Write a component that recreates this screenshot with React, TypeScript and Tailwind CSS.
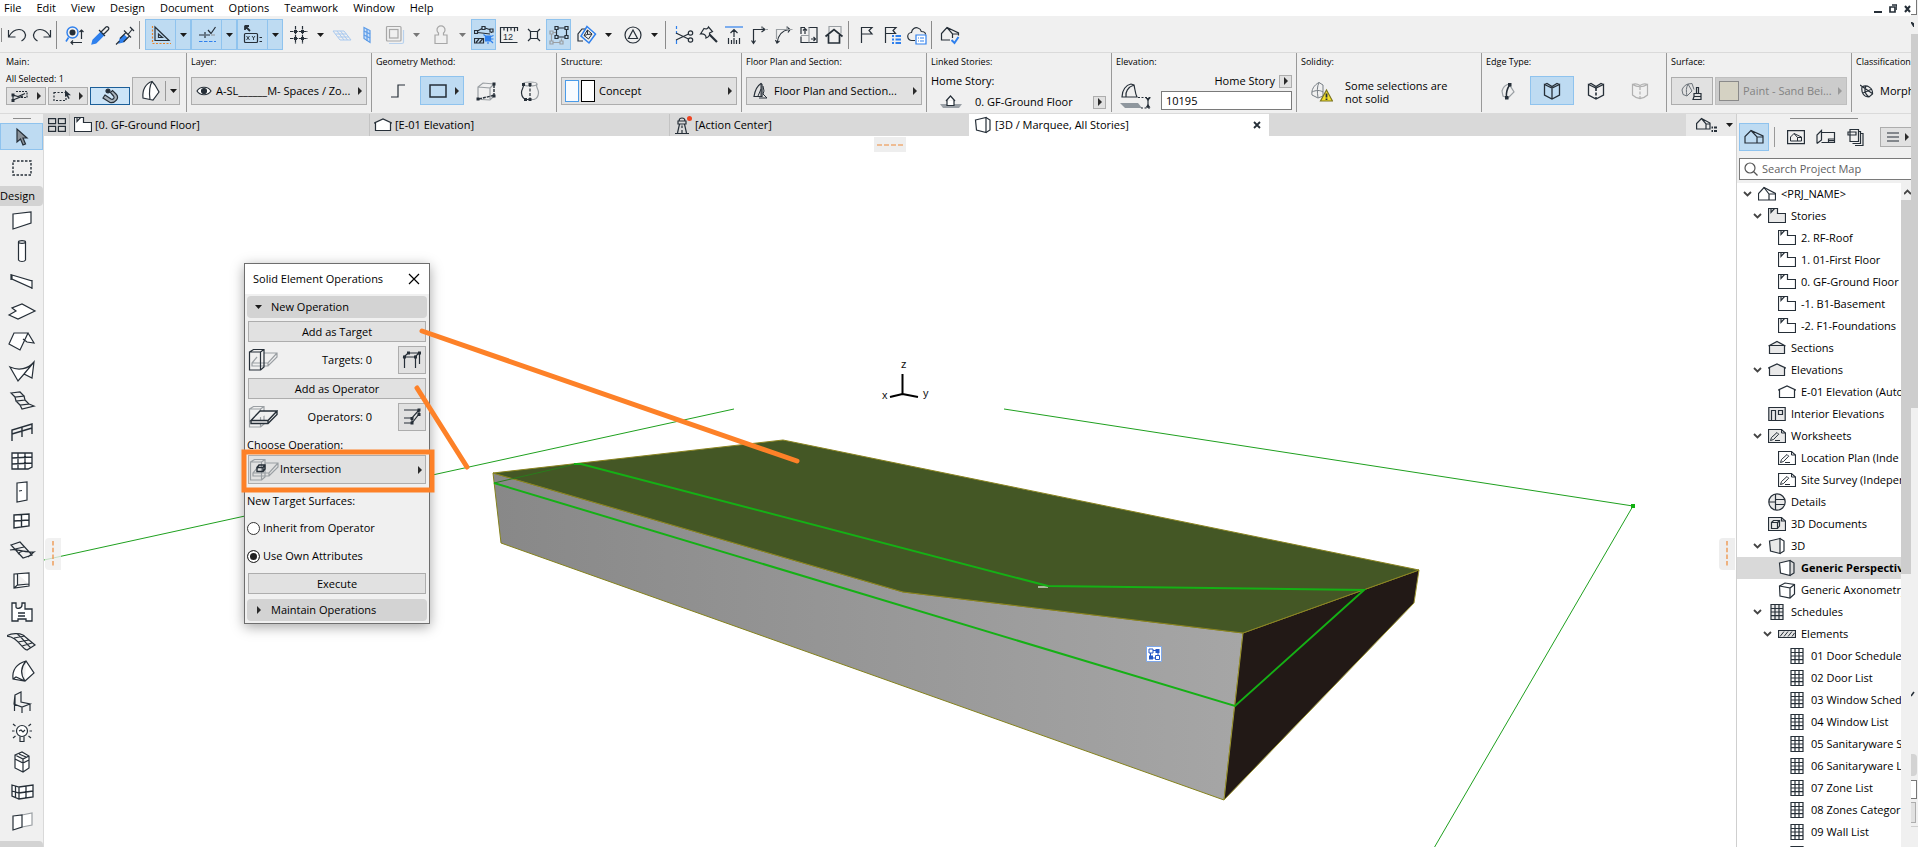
import { useState, type ReactNode } from "react";
import { clsx } from "clsx";

const INK = "#262f38";
const BLUE = "#2f80ed";
const GRAY = "#9a9fa3";

type SvgProps = { w?: number; h?: number; color?: string; children: ReactNode };

function Svg({ w = 20, h = 20, color = INK, children }: SvgProps) {
  return (
    <svg
      className="shrink-0"
      width={w}
      height={h}
      viewBox={`0 0 ${w} ${h}`}
      fill="none"
      stroke={color}
      strokeWidth="1.2"
      aria-hidden="true"
    >
      {children}
    </svg>
  );
}

function ArrowDown({ muted = false }: { muted?: boolean }) {
  return (
    <Svg w={7} h={4}>
      <path d="M0 0h7L3.5 4z" fill={muted ? "#777" : "#1b1b1b"} stroke="none" />
    </Svg>
  );
}

function ArrowRight({ muted = false }: { muted?: boolean }) {
  return (
    <Svg w={4} h={8}>
      <path d="M0 0v8l4-4z" fill={muted ? "#999" : "#2a2a2a"} stroke="none" />
    </Svg>
  );
}

/* ---------- shared icons ---------- */

const StoryIcon = ({ filled = false }: { filled?: boolean }) => (
  <Svg w={18} h={18}>
    <path d="M.5 1.500h9v5h8v9H.5z" fill={filled ? "#e9e9e9" : "#fff"} />
    <path d="M3 1.500v4l3.500-4" />
  </Svg>
);

const ElevationIcon = ({ filled = false }: { filled?: boolean }) => (
  <Svg w={18} h={18}>
    <path d="M1.500 14.500v-8L9 3l7.500 3.500v8z" fill={filled ? "#e9e9e9" : "#fff"} />
    <path d="M0 7.300l1.500-.8M16.500 6.500l1.500.8" />
  </Svg>
);

const SectionIcon = () => (
  <Svg w={18} h={18}>
    <path d="M1.500 6.500h15v8h-15zM.5 7L9 2.500 17.500 7" fill="#e9e9e9" />
  </Svg>
);

const InteriorIcon = () => (
  <Svg w={18} h={18}>
    <path d="M.8 2.500h16.400v13H.8z" fill="#e9e9e9" />
    <path d="M3.500 15.500V5.500h4v10M10.500 5.500h4v4h-4z" />
  </Svg>
);

const WorksheetIcon = ({ filled = false }: { filled?: boolean }) => (
  <Svg w={18} h={18}>
    <path d="M.5 2.500h13l4 3.500v9.500H.5z" fill={filled ? "#e9e9e9" : "#fff"} />
    <path d="M13.500 2.500V6h4M2.500 13.500l1-3L9 5.500l1.700 1.700-5.200 5.300z" strokeWidth="1" />
    <path d="M7 13.500h5" strokeWidth="1" />
  </Svg>
);

const DetailIcon = () => (
  <Svg w={18} h={18}>
    <circle cx="9" cy="9" r="8.200" fill="#e9e9e9" />
    <path d="M7.500 1v16M1 9h6.500M7.500 6.500h9M7.500 11.500h9" />
  </Svg>
);

const Doc3dIcon = () => (
  <Svg w={18} h={18}>
    <path d="M.5 2.500h13l4 3.500v9.500H.5z" fill="#e9e9e9" />
    <path d="M13.500 2.500V6h4M3.500 7.500h6v6h-6zM3.500 7.500l2-2h6v5.500l-2 2.500M9.500 7.500l2-2" />
  </Svg>
);

const PerspectiveIcon = ({ filled = false }: { filled?: boolean }) => (
  <Svg w={18} h={18}>
    <path d="M1.500 4L12 1.500v15L2.500 14z" fill={filled ? "#e9e9e9" : "#fff"} />
    <path d="M12 1.500l4 2.500v10l-4 2.500" />
  </Svg>
);

const AxonometryIcon = () => (
  <Svg w={18} h={18}>
    <path d="M1.500 5l5.500-3 9.500 1.500V13L12 17 2 15z" fill="#fff" />
    <path d="M1.500 5L12 7v10M12 7l4.500-3.500" />
  </Svg>
);

const GridIcon = ({ filled = false }: { filled?: boolean }) => (
  <Svg w={18} h={18}>
    <path d="M3 1.500h12v15H3z" fill={filled ? "#e9e9e9" : "#fff"} />
    <path d="M3 5.500h12M3 9h12M3 12.700h12M7 1.500v15M11 1.500v15" />
  </Svg>
);

const HatchIcon = () => (
  <Svg w={18} h={18}>
    <path d="M.5 5.500h17v7H.5z" fill="#e3e3e3" />
    <path d="M2 11.500l4-5M6 11.500l4-5M10 11.500l4-5M14 11.500l2.500-3.500" strokeWidth="1" />
  </Svg>
);

const HousesIcon = () => (
  <Svg w={20} h={16}>
    <path d="M1 14V7.500l6-6L19 7v7zM7 1.500L13 8h6M13 8v6" />
  </Svg>
);

const ProjectIcon = () => (
  <Svg w={18} h={18}>
    <path d="M.5 15V8.500l5.500-6 11.500 6V15z" fill="#fff" />
    <path d="M6 2.500L11 9h6.500M11 9v6" />
  </Svg>
);

/* ---------- top bars ---------- */

const menus = ["File", "Edit", "View", "Design", "Document", "Options", "Teamwork", "Window", "Help"];

function MenuBar() {
  return (
    <nav className="flex h-4 shrink-0 items-center justify-between bg-white pl-1">
      <div className="flex gap-[15px]">
        {menus.map((m) => (
          <button key={m} type="button" className="text-[11px] leading-4">
            {m}
          </button>
        ))}
      </div>
      <div className="flex items-center gap-[7px]">
        <button type="button" aria-label="Minimize">
          <Svg w={8} h={10}>
            <path d="M0 9h8" strokeWidth="2" />
          </Svg>
        </button>
        <button type="button" aria-label="Restore">
          <Svg w={8} h={10}>
            <path d="M1 4h5v5H1zM3 2h5v5" strokeWidth="1.700" />
          </Svg>
        </button>
        <button type="button" aria-label="Close">
          <Svg w={7} h={10}>
            <path d="M1 3l5 6M6 3L1 9" strokeWidth="2" />
          </Svg>
        </button>
      </div>
    </nav>
  );
}

function Tool({ label, active = false, className = "", children }: { label: string; active?: boolean; className?: string; children: ReactNode }) {
  return (
    <button
      type="button"
      aria-label={label}
      className={clsx(
        "flex h-[31px] w-[25px] shrink-0 items-center justify-center",
        active && "border border-[#8fc3ee] bg-[#bedbf2]",
        className
      )}
    >
      {children}
    </button>
  );
}

function Drop({ label, muted = false }: { label: string; muted?: boolean }) {
  return (
    <button type="button" aria-label={label} className="flex h-[31px] w-[18px] shrink-0 items-center justify-center">
      <ArrowDown muted={muted} />
    </button>
  );
}

function SplitTool({ label, children }: { label: string; children: ReactNode }) {
  return (
    <div className="flex h-[31px] w-[46px] shrink-0 border border-[#8fc3ee] bg-[#bedbf2]">
      <button type="button" aria-label={label} className="flex w-[30px] items-center justify-center border-r border-[#8fc3ee]">
        {children}
      </button>
      <button type="button" aria-label={`${label} options`} className="flex flex-1 items-center justify-center">
        <ArrowDown />
      </button>
    </div>
  );
}

const Sep = () => <div className="mr-[5px] ml-[2px] h-7 w-px shrink-0 bg-[#8b8b8b]" />;

function Toolbar() {
  return (
    <div className="flex h-[37px] shrink-0 items-center border-b border-[#dadada] bg-[#f0f0f0] pt-px pl-px">
      <div className="mr-[2px] h-[14px] w-px bg-[#8b8b8b]" />
      <Tool label="Undo">
        <Svg>
          <path d="M1.500 5v7h7M2 11.500C5 6 8 4.500 12 4.500c5 0 7.500 4.500 6 8-.7 1.500-2 2.700-3.500 3.500" />
        </Svg>
      </Tool>
      <Tool label="Redo">
        <Svg>
          <path d="M18.500 5v7h-7M18 11.500C15 6 12 4.500 8 4.500c-5 0-7.500 4.500-6 8 .7 1.500 2 2.700 3.500 3.500" />
        </Svg>
      </Tool>
      <Sep />
      <Tool label="Find and select">
        <Svg>
          <circle cx="7.500" cy="7.500" r="5.500" stroke={BLUE} strokeWidth="1.400" />
          <circle cx="7.500" cy="7.500" r="3" fill={INK} stroke="none" />
          <path d="M3.500 12.500L1 16.500" stroke={BLUE} strokeWidth="1.600" />
          <path d="M16.500 14V5M14.500 7l2-2 2 2M17 17.500H6M8 15.500l-2 2 2 2" />
        </Svg>
      </Tool>
      <Tool label="Pick up parameters">
        <Svg>
          <path d="M2 19l1-4 8-8 3 3-8 8z" fill={BLUE} stroke={BLUE} />
          <path d="M9 5l6 6M11 7l5-5c1.500-1.200 3.500 1 2.500 2.500L13.500 9.500" />
        </Svg>
      </Tool>
      <Tool label="Inject parameters">
        <Svg>
          <path d="M5 14l4-4 3 3-4 4-4 1z" fill={BLUE} stroke={BLUE} />
          <path d="M4.500 16L1 19.500M5 13.500l6-6 3.500 3.500-6 6M9 5.500l7 7M13 9.500l4-5M15 2l4 4" />
        </Svg>
      </Tool>
      <Sep />
      <SplitTool label="Guide lines">
        <Svg>
          <path d="M1.500 1v17.500H20" stroke="#e8842a" strokeDasharray="2 1.500" />
          <path d="M4 2v13.500h14zM7.500 9v3.500h4z" />
        </Svg>
      </SplitTool>
      <SplitTool label="Snap guides">
        <Svg>
          <path d="M2 10h5M8 7v6M9 10h4" />
          <path d="M11 5l3 3.500L18.500 2" />
          <path d="M14 10h4" stroke={GRAY} />
          <path d="M2 16.500h17" stroke={BLUE} strokeDasharray="3.500 1.500" />
        </Svg>
      </SplitTool>
      <SplitTool label="Tracker">
        <Svg>
          <path d="M2 1h4M2 .5V5M2 1l5 5" strokeWidth="1.800" />
          <rect x="1.500" y="8.500" width="13" height="9" rx="1" />
          <path d="M3.500 11l3 4M6.500 11l-3 4M9 11l1.500 2L12 11M10.500 13v2" strokeWidth=".9" />
          <path d="M16.500 12.500H19M16.500 16.500H19" />
        </Svg>
      </SplitTool>
      <Tool label="Grid snap" className="ml-[3px]">
        <Svg>
          <path d="M6.500 1v18M13.500 1v18M1 6.500h18M1 13.500h18" strokeDasharray="3.500 .9" />
          <path d="M5 5h3v3H5zM12 5h3v3h-3zM5 12h3v3H5zM12 12h3v3h-3z" fill={INK} stroke="none" />
        </Svg>
      </Tool>
      <Drop label="Grid options" />
      <Tool label="Editing plane">
        <Svg color="#a9c9ef">
          <path d="M1 6h11l7 9H8zM3.500 9h11M6 12h11M5 6l7 9M8.500 6l7 9" strokeWidth="1" />
        </Svg>
      </Tool>
      <Tool label="Vertical plane">
        <Svg color="#5b9be8">
          <path d="M7 2.500l6 3v12l-6-4z" fill="#cfe2f8" />
          <path d="M7 6l6 3M7 10l6 3M10 4v12" />
        </Svg>
      </Tool>
      <Tool label="Trace reference" className="ml-[3px]">
        <Svg color="#a7a7a7">
          <path d="M4 18.500h13c1 0 1.500-.5 1.500-1.500V5" stroke="#b9d2ee" />
          <rect x="1.500" y="1.500" width="14.500" height="14.500" rx="1" />
          <rect x="4.500" y="4.500" width="8.500" height="8.500" />
        </Svg>
      </Tool>
      <Drop label="Trace options" muted />
      <Tool label="Gravity" className="ml-[3px]">
        <Svg color="#a7a7a7">
          <path d="M4 18.500V10h3.500V8a4 4 0 1 1 5 0v2H16v8.500z" />
        </Svg>
      </Tool>
      <Drop label="Gravity options" muted />
      <Tool label="Element snap" active>
        <Svg>
          <path d="M3.500 6L8 3.500M3.500 7.500L16 9M11 3l6 2M17.500 6.500V8" />
          <path d="M.5 5.500h3v3h-3zM8 1.500h3v3H8zM16 4h3v3h-3z" fill="#bedbf2" />
          <path d="M.5 13.500h9v4.500h-9zM2 17.500l3-3.500M5.500 17.500L8.500 14" />
          <path d="M11.500 11h5v5h-5z" fill={BLUE} stroke={BLUE} />
          <path d="M9.500 9.500l2 1.500M17 16l2 2M19.500 10.500l-2.500 1M14 19v-2M19.500 14H17" stroke={BLUE} />
        </Svg>
      </Tool>
      <Tool label="Ruler">
        <svg width="20" height="20" viewBox="0 0 20 20" fill="none" stroke={INK} strokeWidth="1.2" aria-hidden="true">
          <path d="M18.500 17.500H1.500v-15h17M5 3v2.500M8.500 3v3.500M12 3v2.500M15.500 3v3.500M18.500 2v4" />
          <text x="4" y="15" fontSize="9" fill={INK} stroke="none" fontFamily="Liberation Sans, sans-serif">
            12
          </text>
        </svg>
      </Tool>
      <Tool label="Explode">
        <Svg>
          <path d="M6.500 6.500h7v7h-7zM4 4l2.500 2.500M16 4l-2.500 2.500M4 16l2.500-2.500M16 16l-2.500-2.500" />
        </Svg>
      </Tool>
      <Tool label="Suspend groups" active>
        <Svg>
          <path d="M2.500 8.500v9h10v-4M4 7.500h3" stroke={GRAY} />
          <path d="M1 6h3v3H1zM1 16h3v3H1zM11 16h3v3h-3z" stroke={GRAY} fill="#bedbf2" />
          <path d="M7.500 3h10v9h-10z" />
          <path d="M6 1.500h3v3H6zM16 1.500h3v3h-3zM6 10.500h3v3H6zM16 10.500h3v3h-3z" fill="#bedbf2" />
        </Svg>
      </Tool>
      <Tool label="3D filter" className="ml-[3px]">
        <Svg>
          <path d="M6 16H1V9l4-5h4" />
          <path d="M10 1.500l8.500 7.500-6.500 9L4 11z" stroke={BLUE} strokeWidth="1.500" />
          <path d="M10.500 5l4.500 4-3.500 5L7 10.500zM7 10.500l3.500-1L15 9M10.500 9.500V5" strokeWidth="1" />
        </Svg>
      </Tool>
      <Drop label="3D filter options" />
      <Tool label="Suspend constraints" className="ml-[3px]">
        <Svg>
          <circle cx="10" cy="10" r="8" />
          <path d="M10 5l4.500 8.500h-9z" />
        </Svg>
      </Tool>
      <Drop label="Constraint options" />
      <Sep />
      <Tool label="Split">
        <Svg>
          <path d="M2.500 1v3M2.500 6v3M2.500 15v4" stroke={BLUE} />
          <path d="M2 8l12.500 6M2 15l12.500-6" />
          <circle cx="16.500" cy="8" r="2.200" />
          <circle cx="16.500" cy="15" r="2.200" />
        </Svg>
      </Tool>
      <Tool label="Trim">
        <Svg>
          <path d="M1.500 9L5 3.500C7.500 4.500 9 3.500 9.500 2l4 4.500-3 1.500c.5 2-1 4-3.500 5C7.500 10 5 8.500 1.500 9z" />
          <path d="M10.500 9.500l7.500 7.500" strokeWidth="2.200" />
        </Svg>
      </Tool>
      <Tool label="Adjust">
        <Svg>
          <path d="M1 2h18" stroke={BLUE} />
          <path d="M10 12V4.500M6.500 8L10 4.500 13.500 8M4.500 13v6M7.500 15v4M10 13v6M12.500 15v4M15.500 13v6" />
        </Svg>
      </Tool>
      <Tool label="Intersect">
        <Svg>
          <path d="M4.500 18V4.500H15M2.500 15.500l2 3 2-3" />
          <path d="M12.500 2l3.500 2.500L12.500 7" />
          <path d="M16 4.500h3M13 1v3" stroke={GRAY} />
        </Svg>
      </Tool>
      <Tool label="Fillet">
        <Svg>
          <path d="M3 18C4 10 8 5.500 15 4.500M13 2l3 2.500L14 7.500M1.500 15l1.500 3 2.500-2" />
          <path d="M2.500 14V4.500h16M13 1v3" stroke={GRAY} />
        </Svg>
      </Tool>
      <Tool label="Resize">
        <Svg>
          <path d="M9.500 2.500h8.500v15H2v-6M2 9V2.500h4" />
          <path d="M2 10.500h8v7M10 2.500v8" stroke={GRAY} />
          <path d="M6 9V3.500M4 5.500l2-2 2 2M12 14h4.500M14.500 12l2 2-2 2" />
        </Svg>
      </Tool>
      <Tool label="Roof trim">
        <Svg>
          <path d="M5 8V1.500h12v7" stroke={GRAY} />
          <path d="M1.500 11.500L10 4.500l8.500 7M4.500 10v8h11v-8" strokeWidth="1.700" />
        </Svg>
      </Tool>
      <Sep />
      <Tool label="Markup">
        <Svg>
          <path d="M4.500 18V2.500h10.500l-3 3 3 3.500H4.500" />
        </Svg>
      </Tool>
      <Tool label="Markup list">
        <Svg>
          <path d="M3.500 18V2.500H14l-3 3 2.500 3h-10" />
          <path d="M10 11h2M13.500 11H19M10 14.500h2M13.500 14.500H19M10 18h2M13.500 18H19" stroke={BLUE} strokeWidth="1.800" />
        </Svg>
      </Tool>
      <Tool label="Cloud issues">
        <Svg>
          <path d="M8 15.500H5a4 4 0 0 1-.5-8C5 4 8 2 11 3c2 .6 3 2 3.300 3.500C17 6.500 18.500 7.500 18.500 9.500" />
          <path d="M9 10h10v9H9z" stroke={BLUE} fill="#fff" />
          <path d="M11 13h1M13 13h4M11 16h1M13 16h4" stroke={BLUE} />
        </Svg>
      </Tool>
      <Sep />
      <Tool label="Model check">
        <Svg>
          <path d="M10 15H1.500V8.500l5.500-6L18.500 8v2.500M7 2.500L12.500 9h6M12.500 9v4" />
          <path d="M11.500 15l3 3 4-6" stroke={BLUE} strokeWidth="2" />
        </Svg>
      </Tool>
    </div>
  );
}

function Cell({ title, children }: { title: string; children: ReactNode }) {
  return (
    <section className="flex h-[59px] w-[185px] shrink-0 flex-col border-r border-[#999] pr-1 pl-1">
      <h2 className="h-[17px] shrink-0 pt-px text-[9px] leading-4 whitespace-nowrap">{title}</h2>
      {children}
    </section>
  );
}

const PanelButton = ({ label, children }: { label?: string; children: ReactNode }) => (
  <button
    type="button"
    aria-label={label}
    className="mt-[7px] flex h-7 w-full items-center border border-[#adadad] bg-[#e1e1e1] pr-1 text-[11px] whitespace-nowrap"
  >
    {children}
  </button>
);

const FlatButton = ({ label, active = false, arrow = false, children }: { label: string; active?: boolean; arrow?: boolean; children: ReactNode }) => (
  <button
    type="button"
    aria-label={label}
    className={clsx(
      "flex h-[29px] w-11 items-center justify-center gap-2",
      active && "border border-[#8fc3ee] bg-[#bedbf2]",
      arrow && "pl-1"
    )}
  >
    {children}
    {arrow && <ArrowRight />}
  </button>
);

function InfoBar() {
  return (
    <div className="flex h-[61px] shrink-0 overflow-hidden border-b border-[#dadada] bg-[#f0f0f0] pl-0.5">
      <Cell title="Main:">
        <div className="flex items-end gap-0.5">
          <div>
            <div className="h-[17px] text-[9px] leading-[18px]">All Selected: 1</div>
            <div className="flex gap-0.5">
              <button type="button" aria-label="Selection set" className="flex h-[18px] w-10 items-center justify-center gap-2 border border-[#adadad] bg-[#e1e1e1]">
                <Svg w={18} h={12}>
                  <path d="M5 1.500h11v6H9" strokeDasharray="2 1" />
                  <path d="M2 10V5l5 1.500 7-3M2 10l10-4" />
                  <path d="M.5 3.500h3v3h-3zM.5 9h3v3h-3z" fill={INK} stroke="none" />
                </Svg>
                <ArrowRight />
              </button>
              <button type="button" aria-label="Marquee selection" className="flex h-[18px] w-10 items-center justify-center gap-2 border border-[#adadad] bg-[#e1e1e1]">
                <Svg w={18} h={12}>
                  <path d="M1 2.500h12v8H1z" strokeDasharray="2 1.500" />
                  <path d="M12 0v7l1.500-1.300L15.500 9l1.200-.8-1.700-3H18z" fill={INK} stroke="none" />
                </Svg>
                <ArrowRight />
              </button>
              <button type="button" aria-label="Magnet" className="flex h-[18px] w-10 items-center justify-center border border-[#1c5f99] bg-[#cce4f7]">
                <Svg w={18} h={16}>
                  <path d="M4 7l6 4c2 1 4-1 2.500-3L9.500 4.500l2-2L15 6c4 4-1 9.500-6 8.500L2 10z" fill="#aab4bd" />
                  <circle cx="7" cy="3" r="2" fill={INK} />
                </Svg>
              </button>
            </div>
          </div>
          <button type="button" aria-label="Morph tool settings" className="mt-[7px] flex h-7 w-12 items-center gap-1 border border-[#adadad] bg-[#e1e1e1] pl-2">
            <Svg w={20} h={22}>
              <path d="M2 18C1 10 5 3 11 1.500l3 3.500 4 7-6 8-3-.5z" fill="#fff" />
              <path d="M11 1.500C8 7 8 13 9 19.500" />
            </Svg>
            <span className="h-5 w-px bg-[#999]" />
            <ArrowDown />
          </button>
        </div>
      </Cell>
      <Cell title="Layer:">
        <PanelButton>
          <span className="mr-1 ml-1 flex">
            <Svg w={16} h={12}>
              <path d="M1 6c3-5 11-5 14 0-3 5-11 5-14 0z" fill="#fff" />
              <circle cx="8" cy="6" r="2.500" fill={INK} />
            </Svg>
          </span>
          <span className="flex-1 text-left">A-SL______M- Spaces / Zo...</span>
          <ArrowRight />
        </PanelButton>
      </Cell>
      <Cell title="Geometry Method:">
        <div className="mt-[6px] flex">
          <FlatButton label="Polygonal">
            <Svg w={16} h={14}>
              <path d="M1 13h7V1h7" />
            </Svg>
          </FlatButton>
          <FlatButton label="Box" active arrow>
            <Svg w={18} h={14}>
              <path d="M1 1h16v12H1z" strokeWidth="1.500" />
            </Svg>
          </FlatButton>
          <FlatButton label="Rotated box">
            <Svg w={20} h={20}>
              <path d="M2 18V6l5-4 11 1M2 6l12 1v11M14 7l4-4M5 18.500l9 .5 4-4" stroke={GRAY} />
              <path d="M18 4v11M3 18l14-3.500" strokeWidth="1.400" strokeDasharray="3 1" />
              <path d="M16.500 1.500h3v3h-3zM16.500 13.500h3v3h-3zM.5 16.500h3v3h-3z" fill={INK} stroke="none" />
            </Svg>
          </FlatButton>
          <FlatButton label="Revolved">
            <Svg w={20} h={20}>
              <path d="M17 3c-2 3 2 5 1.500 9-.3 4-3 6-4.500 6.500H10" stroke={GRAY} />
              <ellipse cx="10" cy="3" rx="7" ry="2" stroke={GRAY} />
              <path d="M3 3c2 3-2 5-1.500 9 .3 4 3 6 4.500 6.500h4" />
              <path d="M10 3v16" strokeDasharray="3 1.500" />
              <path d="M2 2h3v3H2zM8.500 2h3v3h-3zM4 17h3v3H4zM8.500 17h3v3h-3z" fill={INK} stroke="none" />
            </Svg>
          </FlatButton>
        </div>
      </Cell>
      <Cell title="Structure:">
        <PanelButton>
          <span className="ml-[3px] h-[22px] w-[14px] border border-[#4a9be8] bg-[#f7fbff]" />
          <span className="mr-1 ml-0.5 h-[22px] w-[14px] border border-black bg-white" />
          <span className="flex-1 text-left">Concept</span>
          <ArrowRight />
        </PanelButton>
      </Cell>
      <Cell title="Floor Plan and Section:">
        <PanelButton>
          <span className="mr-[6px] ml-[6px] flex">
            <Svg w={15} h={18}>
              <path d="M1 14.500C2 8 4 4 8 1.500l1 1v12H1z" />
              <path d="M8 1.500v13M8 7l-3 7M10 4l1 5-1 3 4 4H6" strokeWidth="1" />
            </Svg>
          </span>
          <span className="flex-1 text-left">Floor Plan and Section...</span>
          <ArrowRight />
        </PanelButton>
      </Cell>
      <Cell title="Linked Stories:">
        <div className="mt-[3px] text-[11px] leading-4">Home Story:</div>
        <div className="mt-[5px] flex items-center pr-px text-[11px] leading-4 whitespace-nowrap">
          <span className="mr-3 ml-2 flex">
            <Svg w={24} h={14}>
              <path d="M1 9h22l-3 4H4z" fill="#9aa0a6" stroke="none" />
              <path d="M7 6l4.500-5L16 6M8 5v5.500h7V5" fill="#fff" />
            </Svg>
          </span>
          <span className="flex-1">0. GF-Ground Floor</span>
          <button type="button" aria-label="Choose story" className="flex size-[13px] shrink-0 items-center justify-center border border-[#adadad] bg-[#e1e1e1]">
            <ArrowRight />
          </button>
        </div>
      </Cell>
      <Cell title="Elevation:">
        <div className="flex">
          <div className="mt-[13px] mr-2.5 ml-1">
            <Svg w={31} h={26}>
              <path d="M2 14C2 7 6 2 11 1l3 1c1 4 1 8 3 12zM6 14C5 9 8 4 14 2" />
              <path d="M0 20h18l4 5H5z" fill="#8f979e" stroke="none" />
              <path d="M18 14.500h13M21 25h10" strokeDasharray="2 1.500" />
              <path d="M28 15v10" />
              <path d="M25.500 15h5L28 18zM25.500 24.500h5l-2.500-3.500z" fill={INK} stroke="none" />
            </Svg>
          </div>
          <div className="flex-1">
            <label htmlFor="elevation" className="mt-[3px] flex items-center justify-end gap-1 text-[11px] leading-4 whitespace-nowrap">
              Home Story
              <span className="flex size-[13px] items-center justify-center border border-[#adadad] bg-[#e1e1e1]">
                <ArrowRight />
              </span>
            </label>
            <input
              id="elevation"
              defaultValue="10195"
              className="mt-0.5 block h-[19px] w-full border border-[#7a7a7a] bg-white px-1 text-[11px] outline-none"
            />
          </div>
        </div>
      </Cell>
      <Cell title="Solidity:">
        <div className="mt-[9px] ml-[10px] flex items-center gap-3">
          <Svg w={22} h={22}>
            <path d="M1 14C0 9 3 4 8 1.500l4 2.500v11l-5 2zM8 1.500c-2 4-2 9-1 15M1 11c4-2 8-2 11 0" stroke="#777e85" strokeWidth="1" />
            <path d="M15.500 9L21.500 20h-12z" fill="#f3df2a" stroke="#7b7421" />
            <path d="M15.500 12.500v4M15.500 17.500V19" strokeWidth="1.800" />
          </Svg>
          <p className="text-[11px] leading-[13px] whitespace-nowrap">
            Some selections are
            <br />
            not solid
          </p>
        </div>
      </Cell>
      <Cell title="Edge Type:">
        <div className="mt-[6px] flex">
          <FlatButton label="Custom edge">
            <Svg w={14} h={18}>
              <path d="M1 9c1-4 3-6 7-7l5 8-6 6-5-2z" stroke={GRAY} />
              <path d="M8.500 3C6 7 5 11 5.500 15" strokeWidth="1.500" />
              <path d="M7 1h3.500v3.500H7zM4 14h3.500v3.500H4z" fill={INK} stroke="none" />
            </Svg>
          </FlatButton>
          <FlatButton label="Hard edge" active>
            <Svg w={18} h={18}>
              <path d="M1.500 2.500L9 6l7.500-3.500V13L9 17l-7.500-4zM1.500 2.500L4 1.500l5 3 5-3 2.500 1M9 6v11" strokeWidth="1.300" />
            </Svg>
          </FlatButton>
          <FlatButton label="Hidden edge">
            <Svg w={18} h={18}>
              <path d="M1.500 2.500L9 6l7.500-3.500V13L9 17l-7.500-4zM1.500 2.500L4 1.500l5 3 5-3 2.500 1" strokeWidth="1.300" />
              <path d="M9 6v11" strokeWidth="1.600" strokeDasharray="3 1.500" />
            </Svg>
          </FlatButton>
          <FlatButton label="Soft edge">
            <Svg w={18} h={18} color="#b0b0b0">
              <path d="M1.500 2.500Q9 7 16.500 2.500V13Q9 20 1.500 13zM1.500 2.500Q5 1 9 3.500q4-2.500 7.500-1" />
              <path d="M9 5v12" strokeDasharray="3 1.500" />
            </Svg>
          </FlatButton>
        </div>
      </Cell>
      <Cell title="Surface:">
        <div className="mt-[7px] flex gap-0.5">
          <button type="button" aria-label="Override surface" className="flex h-7 w-[42px] items-center justify-center border border-[#adadad] bg-[#e1e1e1]">
            <Svg w={22} h={18}>
              <path d="M1 8C2 5 4 3 7 2l4 7-5 5-4-1.500zM7 2c-2 4-2 7-1 12M7 2l4-.5 2 6" stroke="#6b7279" strokeWidth="1" />
              <path d="M13 11.500h7v3h-7zM15.500 11V5.500h2V11M13 14.500l-1 3h8v-3" />
            </Svg>
          </button>
          <button type="button" disabled className="flex h-7 flex-1 items-center border border-[#bfbfbf] bg-[#ccc] pr-1 pl-[3px] text-[11px] whitespace-nowrap text-[#838383]">
            <span className="mr-1 size-5 border border-[#8a8a8a] bg-[#d5d2c3]" />
            <span className="flex-1 text-left">Paint - Sand Bei...</span>
            <ArrowRight muted />
          </button>
        </div>
      </Cell>
      <Cell title="Classification:">
        <div className="mt-[13px] flex items-center gap-1.5 pl-1 text-[11px] leading-4">
          <Svg w={14} h={14}>
            <path d="M2 3c5-3 11 1 10.500 7L9 13C4 13 1 9 2 3zM0 1l13 9M6 2C4 6 5 10 9 13M12 5L3 9" />
          </Svg>
          Morph
        </div>
      </Cell>
    </div>
  );
}

/* ---------- left toolbox ---------- */

const designTools: { name: string; icon: ReactNode }[] = [
  { name: "Wall", icon: <path d="M6 7l18-2v11L6 22z" fill="#fff" /> },
  {
    name: "Column",
    icon: (
      <>
        <path d="M11.500 5v18c1 2 6 2 7 0V5" fill="#fff" />
        <ellipse cx="15" cy="5" rx="3.500" ry="1.300" />
      </>
    ),
  },
  { name: "Beam", icon: <path d="M5 8l20 6v7L5 12zM4 7v6M25 13v9" fill="#fff" /> },
  { name: "Slab", icon: <path d="M2 18l7-4-4-3 10-4 13 7-17 8z" fill="#fff" /> },
  { name: "Roof", icon: <path d="M7 6h14l-8 17L2 17zM21 6l6 10-7-1-4-3" fill="#fff" /> },
  { name: "Shell", icon: <path d="M3 10c9 4 18 2 24-5l-2 16-8-4-6 7zM17 17L27 5" fill="#fff" /> },
  { name: "Stair", icon: <path d="M4 6l9-1 4 4-9 1zM8 10l1 4 9-1-1-4M9 14l4 4 9-1-4-4M13 18l2 4 12-3-5-2" /> },
  { name: "Railing", icon: <path d="M5 24V13l20-6v10M5 17l20-6M15 10v10" strokeWidth="1.400" /> },
  { name: "Curtain Wall", icon: <path d="M5 6h20v14l-4 2H5zM11 6v16M18 6v16M5 11l20-1M5 17l20-1" fill="#fff" strokeWidth="1.300" /> },
  { name: "Door", icon: <path d="M10 6l10-1v18l-10 2zM12 14l3-.5" fill="#fff" /> },
  { name: "Window", icon: <path d="M7 8l15-1v12l-15 2zM14.500 7.500v12.500M7 14l15-1" fill="#fff" strokeWidth="1.400" /> },
  { name: "Skylight", icon: <path d="M4 8l9-3 12 13-9 3zM8 12l9-2M11 17c5-6 10-1 16-2l-6 5M3 13c6-2 12 2 19 2" /> },
  { name: "Opening", icon: <path d="M7 7l15-1v13l-15 2zM10.500 7v11l11.500-1M10.500 18L7 21" fill="#fff" /> },
  { name: "Zone", icon: <path d="M5 6h4v4c0 2 6 2 6-2V6h3v6h7v12h-6v-2h-8v2H5zM11 16h7M11 19h7" fill="#fff" strokeWidth="1.300" /> },
  { name: "Mesh", icon: <path d="M-1 9c6-3 13-3 17-1l12 10-8 5C15 22 10 9-1 9M7 11l11-2M11 15l11-2M15 19l10-3M10 7c5 3 8 9 14 14" /> },
  { name: "Morph", icon: <path d="M6 22C5 13 9 7 19 4l8 12-9 8zM19 4c-5 6-6 13-1 20M6 22l3-2 9 4" fill="#fff" /> },
  { name: "Object", icon: <path d="M8 8l6-3v10l9 2-8 3-8-3zM8 17V8M7.500 17v7M15 20v6M23 17v7" /> },
  {
    name: "Lamp",
    icon: (
      <>
        <circle cx="15" cy="14" r="5.500" fill="#fff" />
        <path d="M13 19.500v5h4v-5M12 14l2-1 2 2 2-2M5 14h2.500M22.500 14H25M6 7l2.500 2M24 7l-2.500 2M6 21l2.500-2M24 21l-2.500-2" />
      </>
    ),
  },
  { name: "Equipment", icon: <path d="M8 8l7-3 7 4v12l-6 4-8-4zM8 8l8 4 6-3M16 12v13M8 12l8 4 6-3M12 7l7 3" fill="#fff" /> },
  { name: "Facade", icon: <path d="M5 8l7 2 14-2v12l-14 2-7-3zM12 10v12M19 9v12M5 14l7 2 14-2M8.500 9v11" fill="#fff" strokeWidth="1.300" /> },
  {
    name: "Corner Window",
    icon: (
      <>
        <path d="M15 8l10-2v12l-10 2" stroke={GRAY} fill="#fff" />
        <path d="M6 9l9-1v12l-9 3z" fill="#fff" />
      </>
    ),
  },
];

function Toolbox() {
  return (
    <aside className="flex w-11 shrink-0 flex-col overflow-hidden border-r border-[#d9d9d9] bg-[#f0f0f0]">
      <div className="mx-auto mt-1 mb-1 h-px w-[18px] shrink-0 bg-[#8b8b8b]" />
      <button type="button" aria-label="Arrow" className="flex h-[27px] shrink-0 items-center justify-center border border-[#8fc3ee] bg-[#bedbf2]">
        <Svg>
          <path d="M5 2v13l3.500-3 2.500 6 2.500-1-2.500-6H15z" fill="#8b9299" />
        </Svg>
      </button>
      <button type="button" aria-label="Marquee" className="flex h-9 shrink-0 items-center justify-center">
        <Svg w={20} h={16}>
          <path d="M1 1h18v14H1z" strokeDasharray="2.500 1.500" strokeWidth="1.400" />
        </Svg>
      </button>
      <h2 className="h-5 shrink-0 rounded-r bg-[#d3d3d3] text-[11px] leading-5">Design</h2>
      <div className="mt-px flex flex-col items-center">
        {designTools.map((t) => (
          <button key={t.name} type="button" aria-label={t.name} className="h-[30px]">
            <Svg w={30} h={30}>
              {t.icon}
            </Svg>
          </button>
        ))}
      </div>
      <div className="mt-1 h-5 shrink-0 rounded-r bg-[#d3d3d3]" />
    </aside>
  );
}

/* ---------- tabs ---------- */

const LighthouseIcon = () => (
  <Svg w={18} h={18}>
    <path d="M1 17.500h14M3.500 17L5.500 8h5l2 9M4 5h8v3H4zM5 5c0-4 6-4 6 0M8 9.500V12M8 14v3" />
    <circle cx="15.500" cy="2.500" r="2.500" fill="#ee4423" stroke="none" />
  </Svg>
);

const tabs = [
  { label: "[0. GF-Ground Floor]", icon: <StoryIcon /> },
  { label: "[E-01 Elevation]", icon: <ElevationIcon /> },
  { label: "[Action Center]", icon: <LighthouseIcon /> },
  { label: "[3D / Marquee, All Stories]", icon: <PerspectiveIcon /> },
];

function TabBar() {
  const [current, setCurrent] = useState(3);
  return (
    <div className="flex h-[22px] shrink-0 bg-[#d9d9d9]">
      <button type="button" aria-label="Tab overview" className="flex w-[25px] items-center justify-center">
        <Svg w={18} h={14}>
          <path d="M.6.600h7v5h-7zM10.400.600h7v5h-7zM.6 8.400h7v5h-7zM10.400 8.400h7v5h-7z" />
        </Svg>
      </button>
      {tabs.map((t, i) => (
        <div key={t.label} className={clsx("flex w-[300px] items-center border-l border-[#c3c3c3] pr-2 pl-1", current === i && "border-white bg-white")}>
          <button type="button" onClick={() => setCurrent(i)} className="flex flex-1 items-center gap-[3px] text-[11px] leading-5">
            {t.icon}
            {t.label}
          </button>
          {current === i && (
            <button type="button" aria-label="Close tab">
              <Svg w={8} h={8}>
                <path d="M1 1l6 6M7 1L1 7" strokeWidth="1.800" />
              </Svg>
            </button>
          )}
        </div>
      ))}
      <div className="flex-1" />
      <button type="button" aria-label="View options" className="flex w-[50px] items-center justify-end gap-2 bg-[#e9e9e9] pr-[3px]">
        <Svg w={22} h={16}>
          <path d="M.6 12V6.500l4.900-5L14 6v6zM5.500 1.500L10 7h4M10 7v5" />
          <path d="M15.500 10.500h1.500M18 10.500h3M15.500 14h1.500M18 14h3" strokeWidth="2" />
        </Svg>
        <ArrowDown />
      </button>
    </div>
  );
}

/* ---------- 3D view ---------- */

function Model() {
  return (
    <svg className="absolute top-0 left-0" width="1692" height="711" viewBox="44 136 1692 711" fill="none" aria-label="3D view">
      <defs>
        <linearGradient id="side" x1="493" y1="0" x2="1243" y2="0" gradientUnits="userSpaceOnUse">
          <stop offset="0" stopColor="#888" />
          <stop offset="1" stopColor="#a6a6a6" />
        </linearGradient>
      </defs>
      <path d="M44 560L734 409M1004 409L1633 506L1434 848" stroke="#1fa01f" />
      <path d="M1631 504h4v4h-4z" fill="#12b012" />
      <path d="M493 473L903 592L1243 633L1224 800L501 543z" fill="url(#side)" stroke="#84811c" />
      <path d="M1243 633L1419 570L1414 603L1224 800z" fill="#221916" stroke="#9c9534" />
      <path d="M493 473L783 440L1419 570L1243 633L903 592z" fill="#445725" stroke="#8a8420" />
      <path d="M494 483L576 464" stroke="#2a7c1c" />
      <path d="M1038 587h10" stroke="#cfd8c4" strokeWidth="1.5" />
      <path d="M574 464h7L1048 586L1364 590L1235 706L494 483" stroke="#15b015" strokeWidth="2" />
      <g transform="translate(1146 646)">
        <path d="M.5.500h15v15H.5z" fill="#fff" stroke="#7fa8ea" />
        <path d="M3 3h4v4H3zM9.500 9.500h4v4h-4zM7 4.500h3M4.500 7v3M12 7v3M7 12h3" stroke="#2457c5" />
        <path d="M9.500 3h4v4h-4zM3 9.500h4v4H3z" fill="#2457c5" />
      </g>
      <path d="M902.500 374v20M902.500 394L890 397M902.500 394L918 397" stroke="#000" strokeWidth="2" />
      <g fontSize="11" fill="#111" fontFamily="Liberation Sans, sans-serif">
        <text x="901" y="368">z</text>
        <text x="882" y="399">x</text>
        <text x="923" y="397">y</text>
      </g>
    </svg>
  );
}

function Annotations() {
  return (
    <svg className="pointer-events-none absolute top-0 left-0" width="1692" height="711" viewBox="44 136 1692 711" fill="none" stroke="#fd8128" aria-hidden="true">
      <path d="M422 331L797 461M417 388L467 467" strokeWidth="5" strokeLinecap="round" />
      <rect x="244" y="452" width="188" height="38" strokeWidth="5" />
    </svg>
  );
}

const DialogButton = ({ children }: { children: ReactNode }) => (
  <button type="button" className="block h-[21px] w-full border border-[#adadad] bg-[#e1e1e1] text-center leading-[18px]">
    {children}
  </button>
);

const SolidIcon = ({ part }: { part: "target" | "operator" | "both" }) => {
  return (
    <Svg w={30} h={24} color={GRAY}>
      {part !== "operator" && <path d="M9 9L4 15v3h16l9-9V5H16M4 15h16l9-10M20 15v3" />}
      <path d="M1.500 4h11v18h-11zM1.500 4l4-2.500H16V19l-3.500 3M12.500 4L16 1.500" stroke={part === "target" ? INK : GRAY} />
      {part === "operator" && (
        <path d="M3 15.500L12 6h17l-9 9.500zM3 15.500v3h17l9-9V6M20 15.500v3" fill="#f0f0f0" stroke={INK} strokeWidth="1.400" />
      )}
      {part === "both" && <path d="M8 9.500h6v4H8zM8 9.500L10 7h6v4l-2 2.500M14 9.500L16 7" stroke={INK} strokeWidth="1.400" />}
    </Svg>
  );
};

function SolidOperationsDialog() {
  const [surface, setSurface] = useState("own");
  return (
    <section className="absolute top-[127px] left-[200px] flex w-[186px] flex-col border border-[#6e6e6e] bg-[#f0f0f0] pb-0.5 text-[11px] shadow-[0_3px_12px_rgba(0,0,0,0.35)]">
      <header className="flex h-[30px] items-center justify-between bg-white pr-[9px] pl-2">
        <h2 className="whitespace-nowrap">Solid Element Operations</h2>
        <button type="button" aria-label="Close">
          <Svg w={12} h={12} color="#000">
            <path d="M1 1l10 10M11 1L1 11" />
          </Svg>
        </button>
      </header>
      <button type="button" className="mx-0.5 mt-[2px] flex h-[22px] items-center rounded-sm bg-[#d3d3d3] pl-2">
        <ArrowDown />
        <span className="ml-[9px]">New Operation</span>
      </button>
      <div className="flex flex-col px-[3px] pt-[3px]">
        <DialogButton>Add as Target</DialogButton>
        <div className="my-1 flex h-7 items-center justify-between">
          <SolidIcon part="target" />
          <span className="ml-auto mr-[26px]">Targets: 0</span>
          <button type="button" aria-label="Select targets" className="flex size-7 items-center justify-center border border-[#adadad] bg-[#e1e1e1]">
            <Svg>
              <path d="M2 7l4-4h11l-4 4zM2.500 7v11M13.500 7v11M17.500 3v11" />
              <path d="M1 5.500h3v3H1zM12 5.500h3v3h-3zM5 1.500h3v3H5zM16 1.500h3v3h-3z" fill={INK} stroke="none" />
            </Svg>
          </button>
        </div>
        <DialogButton>Add as Operator</DialogButton>
        <div className="my-1 flex h-7 items-center justify-between">
          <SolidIcon part="operator" />
          <span className="ml-auto mr-[26px]">Operators: 0</span>
          <button type="button" aria-label="Select operators" className="flex size-7 items-center justify-center border border-[#adadad] bg-[#e1e1e1]">
            <Svg>
              <path d="M2 3h15l-7 8H2M17 3v4l-7 9H2M10 11v5" />
              <path d="M15.500 1.500h3v3h-3zM8.500 10h3v3h-3zM8.500 14.500h3v3h-3zM15.500 6h3v3h-3z" fill={INK} stroke="none" />
            </Svg>
          </button>
        </div>
        <span className="-ml-px h-5 leading-5">Choose Operation:</span>
        <button type="button" className="flex h-[29px] items-center border border-[#adadad] bg-[#e1e1e1] pr-[3px]">
          <SolidIcon part="both" />
          <span className="ml-px flex-1 text-left">Intersection</span>
          <ArrowRight />
        </button>
        <fieldset className="-ml-px mt-[7px]">
          <legend className="h-[23px] leading-5">New Target Surfaces:</legend>
          {[
            { id: "inherit", label: "Inherit from Operator" },
            { id: "own", label: "Use Own Attributes" },
          ].map((o) => (
            <label key={o.id} className="flex h-7 items-center gap-[3px]">
              <input
                type="radio"
                name="surface"
                checked={surface === o.id}
                onChange={() => setSurface(o.id)}
                className="size-[13px] appearance-none rounded-full border border-[#333] bg-white checked:bg-[#222] checked:shadow-[inset_0_0_0_2px_white]"
              />
              {o.label}
            </label>
          ))}
        </fieldset>
        <div className="mt-[3px]">
          <DialogButton>Execute</DialogButton>
        </div>
      </div>
      <button type="button" className="mx-0.5 mt-[5px] flex h-[22px] items-center rounded-sm bg-[#d3d3d3] pl-[10px]">
        <ArrowRight />
        <span className="ml-[10px]">Maintain Operations</span>
      </button>
    </section>
  );
}

/* dashed grip for docking palettes to the edge of the view */
function Grip({ vertical = false }: { vertical?: boolean }) {
  return vertical ? (
    <Svg w={2} h={28} color="#ee8a38">
      <path d="M1 1v26" strokeDasharray="4.500 2.200" />
    </Svg>
  ) : (
    <Svg w={28} h={2} color="#ee8a38">
      <path d="M1 1h26" strokeDasharray="5 2" />
    </Svg>
  );
}

function Viewport() {
  return (
    <main className="relative flex-1 overflow-hidden bg-white">
      <Model />
      <div className="absolute top-px left-[830px] flex h-[15px] w-8 items-center justify-center bg-[#eee]">
        <Grip />
      </div>
      <div className="absolute top-[402px] left-px flex h-8 w-4 items-center justify-center rounded-l bg-[#eee]/80">
        <Grip vertical />
      </div>
      <div className="absolute top-[402px] right-px flex h-8 w-4 items-center justify-center rounded-l bg-[#eee]">
        <Grip vertical />
      </div>
      <SolidOperationsDialog />
      <Annotations />
    </main>
  );
}

/* ---------- navigator ---------- */

type Node = { level: number; label: string; icon: ReactNode; open?: boolean; selected?: boolean };

const story = (label: string): Node => ({ level: 2, label, icon: <StoryIcon /> });
const list = (label: string): Node => ({ level: 3, label, icon: <GridIcon /> });

const tree: Node[] = [
  { level: 0, label: "<PRJ_NAME>", icon: <ProjectIcon />, open: true },
  { level: 1, label: "Stories", icon: <StoryIcon filled />, open: true },
  story("2. RF-Roof"),
  story("1. 01-First Floor"),
  story("0. GF-Ground Floor"),
  story("-1. B1-Basement"),
  story("-2. F1-Foundations"),
  { level: 1, label: "Sections", icon: <SectionIcon /> },
  { level: 1, label: "Elevations", icon: <ElevationIcon filled />, open: true },
  { level: 2, label: "E-01 Elevation (Auto", icon: <ElevationIcon /> },
  { level: 1, label: "Interior Elevations", icon: <InteriorIcon /> },
  { level: 1, label: "Worksheets", icon: <WorksheetIcon filled />, open: true },
  { level: 2, label: "Location Plan (Inde", icon: <WorksheetIcon /> },
  { level: 2, label: "Site Survey (Indeper", icon: <WorksheetIcon /> },
  { level: 1, label: "Details", icon: <DetailIcon /> },
  { level: 1, label: "3D Documents", icon: <Doc3dIcon /> },
  { level: 1, label: "3D", icon: <PerspectiveIcon filled />, open: true },
  { level: 2, label: "Generic Perspective", icon: <PerspectiveIcon />, selected: true },
  { level: 2, label: "Generic Axonometry", icon: <AxonometryIcon /> },
  { level: 1, label: "Schedules", icon: <GridIcon filled />, open: true },
  { level: 2, label: "Elements", icon: <HatchIcon />, open: true },
  list("01 Door Schedule"),
  list("02 Door List"),
  list("03 Window Sched"),
  list("04 Window List"),
  list("05 Sanitaryware S"),
  list("06 Sanitaryware L"),
  list("07 Zone List"),
  list("08 Zones Categor"),
  list("09 Wall List"),
  list(""),
];

const indents = ["pl-0", "pl-[10px]", "pl-5", "pl-[30px]"];

function Navigator() {
  return (
    <aside className="flex w-[175px] shrink-0 flex-col overflow-hidden border-l border-[#cfcfcf] bg-[#f0f0f0]">
      <div className="mx-auto mt-1 h-px w-[68px] shrink-0 bg-[#8b8b8b]" />
      <div className="mt-1 flex h-7 shrink-0 items-center pl-0.5">
        <button type="button" aria-label="Project map" className="flex h-7 w-[30px] items-center justify-center border border-[#8fc3ee] bg-[#bedbf2]">
          <HousesIcon />
        </button>
        <div className="ml-[5px] h-5 w-px bg-[#999]" />
        <button type="button" aria-label="View map" className="ml-[6px] flex w-[30px] justify-center">
          <Svg w={18} h={16}>
            <path d="M.6 1.600h16.800v13H.6z" />
            <path d="M3.500 12V8L7 4.500 14.500 8v4zM7 4.500L10.500 8.500h4M10.500 8.500V12" strokeWidth="1" />
          </Svg>
        </button>
        <button type="button" aria-label="Layout book" className="flex w-[30px] justify-center">
          <Svg w={20} h={18}>
            <path d="M1 15.500V7l4.500-4.500V12L1 15.500M5.500 4.500H18.500v10H5.500M12.500 14.500V11h6M12.500 12.700h6" />
          </Svg>
        </button>
        <button type="button" aria-label="Publisher sets" className="flex w-[30px] justify-center">
          <Svg w={18} h={18}>
            <path d="M3 1.500h8.500v12H3zM1 4h8v3H1zM11.500 3.500h2v12H5.500M13.500 5.500h2.500v12H8" />
          </Svg>
        </button>
        <button type="button" aria-label="Navigator menu" className="ml-[9px] flex h-5 flex-1 items-center gap-[6px] border border-r-0 border-[#adadad] bg-[#e1e1e1] pl-[6px]">
          <Svg w={12} h={10}>
            <path d="M0 1h12M0 5h12M0 9h12" />
          </Svg>
          <ArrowRight />
        </button>
      </div>
      <label className="mt-[7px] mb-[3px] ml-0.5 flex h-[22px] shrink-0 items-center gap-1 border border-r-0 border-[#7a7a7a] bg-white pl-1">
        <Svg w={14} h={14} color="#555">
          <circle cx="6" cy="6" r="5" />
          <path d="M9.500 9.500L13.500 13.500" />
        </Svg>
        <input
          aria-label="Search Project Map"
          placeholder="Search Project Map"
          className="min-w-0 flex-1 text-[11px] outline-none placeholder:text-[#5f5f5f]"
        />
      </label>
      <div className="flex min-h-0 flex-1">
        <ul className="min-w-0 flex-1 overflow-hidden bg-white text-[11px]">
          {tree.map((n, i) => (
            <li key={i} className={clsx("flex h-[22px] items-center whitespace-nowrap", indents[n.level], n.selected && "bg-[#d9d9d9] font-bold")}>
              <span className="flex w-[21px] shrink-0 justify-center">
                {n.open && (
                  <Svg w={9} h={6} color="#444">
                    <path d="M1 1l3.500 3.500L8 1" strokeWidth="1.800" />
                  </Svg>
                )}
              </span>
              {n.icon}
              <span className="ml-[5px]">{n.label}</span>
            </li>
          ))}
        </ul>
        <div className="flex w-[10px] shrink-0 flex-col bg-[#f0f0f0]">
          <div className="flex h-[17px] items-center justify-end">
            <Svg w={7} h={6} color="#444">
              <path d="M0 5l3.500-3.500L7 5" strokeWidth="1.800" />
            </Svg>
          </div>
          <div className="h-[374px] bg-[#cdcdcd]" />
        </div>
      </div>
    </aside>
  );
}

/* narrow sliver of the outer scrolling palette */
function OuterStrip() {
  return (
    <div className="flex w-[7px] shrink-0 flex-col bg-[#f0f0f0]">
      <div className="mr-px h-[15px] shrink-0 border-r border-b border-[#777] bg-white" />
      <div className="flex h-[19px] shrink-0 items-center">
        <Svg w={3} h={5}>
          <path d="M0 0l3 5V2z" fill="#333" />
        </Svg>
      </div>
      <div className="h-[374px] shrink-0 bg-[#cdcdcd]" />
      <div className="mt-[283px] h-[6px] shrink-0">
        <Svg w={4} h={6}>
          <path d="M0 5l3-4" strokeWidth="1.600" />
        </Svg>
      </div>
      <div className="mt-[57px] mr-px h-[22px] shrink-0 rounded-r bg-[#d3d3d3]" />
      <div className="mt-1 mr-px h-[19px] shrink-0 border border-l-0 border-[#777] bg-white" />
      <div className="mt-[3px] mr-0.5 h-[21px] shrink-0 border border-l-0 border-[#adadad] bg-[#e1e1e1]" />
      <div className="mt-[3px] h-px shrink-0 bg-[#cfcfcf]" />
    </div>
  );
}

export default function App() {
  return (
    <div className="flex h-screen overflow-hidden bg-white font-['Open_Sans','Noto_Sans',sans-serif] text-black">
      <div className="flex min-w-0 flex-1 flex-col">
        <MenuBar />
        <Toolbar />
        <InfoBar />
        <div className="flex min-h-0 flex-1">
          <Toolbox />
          <div className="flex min-w-0 flex-1 flex-col">
            <TabBar />
            <Viewport />
          </div>
          <Navigator />
        </div>
      </div>
      <OuterStrip />
    </div>
  );
}
